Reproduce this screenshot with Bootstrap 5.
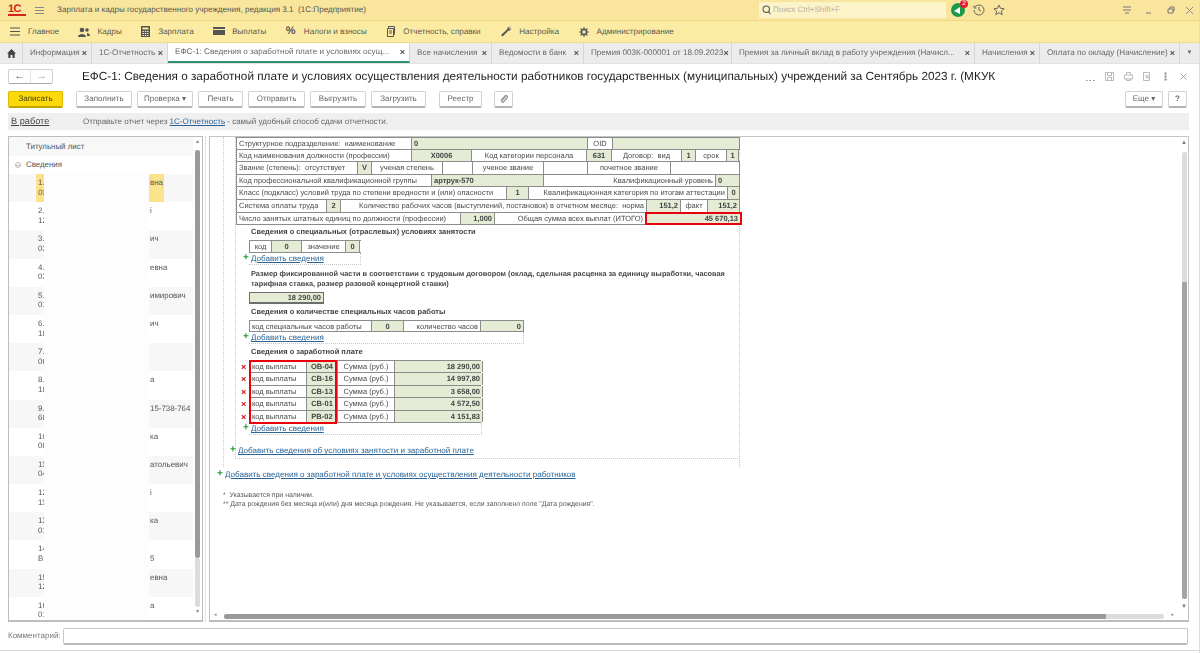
<!DOCTYPE html>
<html lang="ru"><head><meta charset="utf-8"><title>ЕФС-1</title>
<link rel="stylesheet" href="https://cdn.jsdelivr.net/npm/bootstrap@5.3.0/dist/css/bootstrap.min.css">
<style>
html,body{height:653px;overflow:hidden}
body{width:1200px;font-family:"Liberation Sans",Arial,sans-serif;font-size:8px;color:#4a4a4a;background:#fff;line-height:1.15;filter:blur(.35px);text-rendering:geometricPrecision;border-right:1px solid #ddd}
a{color:#2a6496}
svg{display:block;flex:none}
.ctl-a{margin-left:117px}.ctl-b{margin-left:12px}.ctl-c{margin-left:9px}
.pct{font-size:11px;color:#555;width:11px}.tiny{font-size:6px}
.topbar{height:20px;background:#f9e59b;padding-left:8px}
.logo1c{width:18px;font-weight:700;font-size:11px;color:#d3241c;line-height:9px;border-bottom:2px solid #d3241c;letter-spacing:-.5px;height:11px;margin-right:9px}
.wintitle{margin-left:13px;width:702px;font-size:8.1px;color:#555}
.searchbox{width:187px;height:16px;background:#fdf3c9;color:#b5b5a0;font-size:8px;padding-left:3px;gap:2px}
.belld{width:14px;height:14px;border-radius:50%;background:#1c9a4b;margin-left:5px;position:relative}
.bellb{position:absolute;top:-3px;right:-3px;width:8px;height:8px;border-radius:50%;background:#e0202a;color:#fff;font-size:6.5px;line-height:8px;text-align:center}
.sectbar{height:23px;background:#fbeba3;border-top:1px solid #efd985;border-bottom:1px solid #eedc92;padding-left:10px;font-size:8.1px;color:#5a5a50}
.sectbar span{margin-left:7px}
.secti{margin-right:19.5px}
.tabbar{height:21px;background:#ececec;font-size:8.1px;color:#666;border-bottom:1px solid #e2e2e2;white-space:nowrap}
.tabx{height:20px;border-right:1px solid #d4d4d4;padding:0 4px 0 7px}
.tabx b{margin-left:auto;font-size:9px;color:#555;font-weight:700}
.tab-home{width:23px;justify-content:center;padding:0}
.tab-on{background:#fff;border-bottom:2px solid #2e9070}
.t68{width:69px}.t75{width:76px}.t241{width:242px}.t81{width:82px}.t91{width:92px}.t148{width:148px}.t243{width:243px}.t65{width:65px}.t140{width:140px}.t20{width:19px;justify-content:center;padding:0;border:0}
.titlerow{height:15px;margin-top:5px;padding-left:8px}
.navbox{width:45px;height:15px;border:1px solid #d0d0d0;border-bottom-color:#aaa;border-radius:2px;margin-right:29px;color:#666}
.navbox i{flex:1;text-align:center;font-style:normal;font-size:11px;line-height:12px}
.navbox i+i{border-left:1px solid #e2e2e2;color:#aaa}
.doctitle{width:1004px;flex:none;font-size:11.75px;color:#1e1e1e;white-space:nowrap}
.ticons{gap:10px}
.tdots{margin-left:2px}
.tclose{margin-left:3px}
.cmdrow{height:18px;margin-top:6px;padding:0 12px 0 8px}
.tb{height:17px;border:1px solid #d2d2d2;border-bottom:2px solid #b4b4b4;border-radius:2px;background:#fff;font-size:8px;color:#666;justify-content:center;margin-right:5px}
.tb-save{width:55px;background:#fbd90d;border:1px solid #dcbc00;border-bottom:2px solid #c2a500;color:#4a4000;margin-right:13px}
.b56{width:56px}.b57{width:57px}.b45{width:45px}.b55{width:55px}.b43{width:43px;margin-left:8px;margin-right:12px}.b19{width:19px}.b38{width:38px}
.infobar{height:17px;margin:5px 10px 0 8px;background:#efefef;padding-left:3px;font-size:8px;color:#666}
.stateln{width:72px;font-size:9.2px;color:#444;text-decoration:underline}
.workarea{height:486px;margin:6px 0 0 8px}
.leftp{width:195px;height:486px;border:1px solid #bdbdbd;border-bottom-width:2px;position:relative;overflow:hidden}
.listcol{flex:1;overflow:hidden;font-size:7.9px;color:#555}
.headrow{height:19px;background:#f8f8f8;padding-left:17px}
.headrow2{height:18px;padding-left:6px;gap:5px;background:#fff}
.minus{width:6px;height:6px;border:1px solid #bbb;border-radius:50%;display:flex;align-items:center;justify-content:center}
.minus::after{content:"";width:4px;height:1px;background:#bbb}
.empl{height:28.2px;padding-left:27px;line-height:9.6px}
.empl:nth-child(odd){background:#f7f7f7}
.empl .lcol{width:114px;white-space:nowrap;overflow:hidden;padding:4px 0 0 2px}
.empl .rcol{white-space:nowrap;padding-top:4px}
.emp-on .lcol,.emp-on .rcol{background:#fbe38d;height:28px}
.emp-on .rcol{width:14px}
.redact{position:absolute;left:35px;top:37px;width:105px;height:450px;background:#fdfdfd}
.vbar{width:9px;padding-top:2px;color:#888;font-size:6px;text-align:center;background:#fff}
.vth{width:5px;height:408px;background:#9a9a9a;margin:4px auto 0;border-radius:2px}
.vtr{width:5px;height:49px;background:#dcdcdc;margin:0 auto 2px;border-radius:2px}
.gutter{width:6px;position:relative}
.gutter::after{content:"";display:block;height:100%;width:0;border-left:1px dotted #ccc;margin-left:2px}
.rightp{width:980px;height:486px;border:1px solid #c4c4c4;border-bottom:2px solid #bdbdbd;overflow:hidden}
.fmain{flex:1;min-height:0}
.formv{flex:1;overflow:hidden;padding-left:13px}
.rvbar{width:8px;padding-top:1px;color:#777;font-size:7px;line-height:9px;text-align:center}
.rvtr{width:5px;height:130px;margin:5px auto 0;background:#dcdcdc;border-radius:2px 2px 0 0}
.rvth{width:5px;height:317px;margin:0 auto 3px;background:#a4a4a4;border-radius:0 0 2px 2px}
.g1{width:517px;border-left:1px dotted #c8c8c8;border-right:1px dotted #c8c8c8;height:330px;padding-left:11px}
.g2{height:322px;width:505px;border-left:1px dotted #c8c8c8;border-bottom:1px dotted #c8c8c8}
.frow{height:12.6px;border-left:1px solid #8c8c8c;border-bottom:1px solid #8c8c8c;white-space:nowrap;overflow:visible}
.rtop{border-top:1px solid #8c8c8c}
.fc{height:100%;border-right:1px solid #8c8c8c;padding:0 2px;line-height:11.3px;flex:none;overflow:hidden;color:#4c4c4c;font-size:7.5px}
.cen{text-align:center}.rgt{text-align:right}
.gr{background:#e4ecd6;font-weight:700;color:#444}
.ww175{width:175px}.ww176{width:176px}.ww60{width:60px}.ww115{width:115px}.ww25{width:25px}.ww127{width:127px}.ww70{width:70px}.ww14{width:14px}.ww31{width:31px}.ww12{width:12px}
.ww120{width:121px}.ww71{width:71px}.ww30{width:30px}.ww44{width:44px}.ww83{width:83px}.ww69{width:69px}
.ww195{width:195px}.ww112{width:112px}.ww172{width:172px}.ww24{width:24px}
.ww270{width:270px}.ww22{width:22px}.ww199{width:199px}
.ww90{width:90px}.ww306{width:306px}.ww34{width:34px}.ww27{width:27px}.ww32{width:32px}
.ww224{width:224px}.ww151{width:151px}.ww95{width:95px}
.rbox{outline:2.5px solid #e8000b;outline-offset:-1px;position:relative;color:#444;z-index:2}
.inner{padding-left:13px}
.sect-t{font-weight:700;color:#444;padding-left:2px;font-size:7.5px}
.mt1{height:15px;padding-top:3px}
.mini{width:112px}
.addl{height:12px;gap:2px;line-height:12px}
.addl a{font-size:8.05px}
.plus{color:#1f9a2c;font-weight:700;font-size:10px;width:6px;line-height:10px;margin-left:-6px}
.dot-b{border-bottom:1px dotted #c8c8c8;border-right:1px dotted #c8c8c8}
.d361{width:112px;height:12px}
.tt2{height:27px;padding-top:4px;width:490px;line-height:10px;font-size:7.35px}
.box74{width:75px;height:12px;border:1px solid #6e6e6e;border-bottom-width:2px;text-align:right;padding-right:2px;line-height:10px;background:#e4ecd6;font-weight:700;font-size:7.5px}
.tt3{height:16px;padding-top:4px}
.w275{width:275px}.ww122{width:122px}.ww32b{width:32px}.ww77{width:77px}.ww43{width:43px}
.d523{width:275px}
.ww57{width:57px}.ww88{width:88px}.ww57b{width:57px}
.salwrap{position:relative;width:233px}
.sal{width:232px}
.xm{color:#d2111b;font-weight:700;font-size:9px;position:absolute;left:-8px;line-height:10px;margin-top:1px}
.redbox{position:absolute;left:0;top:0;width:88px;height:64px;border:2.5px solid #e8000b;pointer-events:none}
.d481{width:233px}
.lnk2{height:13px;margin-top:10px}
.lnk3{height:12px;margin-top:2px}
.foot{font-size:6.9px;color:#555;line-height:9px;margin-top:10px}
.hbar{height:8px;padding-left:4px;gap:3px;color:#888;font-size:5px}
.hth{width:882px;height:5px;background:#9a9a9a;border-radius:2px 0 0 2px;margin-left:4px}
.htr{width:58px;height:5px;background:#dcdcdc;border-radius:0 2px 2px 0;margin-left:-3px}
.harr{margin-left:5px}
.cmt{height:18px;margin-top:5px;padding-left:8px;color:#777;font-size:8px}
.cmt span{width:55px}
.cmtbox{width:1125px;height:17px;border:1px solid #c8c8c8;border-bottom:2px solid #bbb;border-radius:2px}
.winbot{height:1px;margin-top:5px;background:#d8d8d8}
</style></head><body>

<div class="topbar d-flex align-items-center">
<div class="logo1c">1С</div>
<svg width="9" height="9" viewBox="0 0 9 9" stroke="#888" stroke-width="1"><path d="M0 1.5h9M0 4.5h9M0 7.5h9"/></svg>
<div class="wintitle">Зарплата и кадры государственного учреждения, редакция 3.1 &nbsp;(1С:Предприятие)</div>
<div class="searchbox d-flex align-items-center"><svg width="9" height="10" viewBox="0 0 9 10" fill="none" stroke="#555" stroke-width="1.1"><circle cx="4.2" cy="4.2" r="3.2"/><path d="M6.5 6.8L8.5 9"/></svg>Поиск Ctrl+Shift+F</div>
<div class="belld"><svg width="14" height="14" viewBox="0 0 14 14" fill="#fff"><path d="M3 8l6-4v7z"/></svg><div class="bellb">2</div></div>
<svg class="ms-2" width="12" height="12" viewBox="0 0 12 12" fill="none" stroke="#666"><path d="M2 3a5 5 0 1 1-1 3M1 1.5V4h2.5M6 3v3l2 1.5"/></svg>
<svg class="ms-2" width="12" height="12" viewBox="0 0 12 12" fill="none" stroke="#666"><path d="M6 1l1.5 3.3 3.6.4-2.7 2.4.8 3.5L6 8.8l-3.2 1.8.8-3.500L.9 4.700l3.600-.4z"/></svg>
<svg class="ctl-a" width="10" height="10" viewBox="0 0 10 10" fill="none" stroke="#777"><path d="M1 2h8M1 5h8M3 8h4"/></svg>
<svg class="ctl-b" width="10" height="10" viewBox="0 0 10 10" stroke="#777"><path d="M2 8h5"/></svg>
<svg class="ctl-b" width="10" height="10" viewBox="0 0 10 10" fill="none" stroke="#777"><path d="M2 4h5v4H2zM4 4V2h4v4H7"/></svg>
<svg class="ctl-c" width="9" height="9" viewBox="0 0 9 9" stroke="#888"><path d="M1 1l7 7M8 1L1 8"/></svg>
</div>

<div class="sectbar d-flex align-items-center">
<div class="d-flex align-items-center secti"><svg width="10" height="9" viewBox="0 0 10 9" stroke="#555" stroke-width="1.2"><path d="M0 1h10M0 4.5h10M0 8h10"/></svg><span class="ms-2">Главное</span></div>
<div class="d-flex align-items-center secti"><svg width="12" height="10" viewBox="0 0 12 10" fill="#555"><circle cx="4" cy="3" r="2.3"/><circle cx="9" cy="3" r="1.8"/><path d="M0 10c0-4 8-4 8 0zM9 6c2 0 3 1.500 3 3H9z"/></svg><span>Кадры</span></div>
<div class="d-flex align-items-center secti"><svg width="9" height="11" viewBox="0 0 9 11" fill="#555"><path d="M0 0h9v11H0zM1.500 1.500v2h6v-2zM1.500 5v1h1.500V5zM3.800 5v1h1.500V5zM6 5v1h1.500V5zM1.500 7v1h1.500V7zM3.800 7v1h1.500V7zM6 7v1h1.500V7zM1.500 9v1h1.500V9zM3.800 9v1h1.500V9zM6 9v1h1.500V9z" fill-rule="evenodd"/></svg><span class="ms-2">Зарплата</span></div>
<div class="d-flex align-items-center secti"><svg width="12" height="8" viewBox="0 0 12 8" fill="#555"><path d="M0 0h12v8H0zM0 2v1h12V2z" fill-rule="evenodd"/></svg><span>Выплаты</span></div>
<div class="d-flex align-items-center secti"><b class="pct">%</b><span>Налоги и взносы</span></div>
<div class="d-flex align-items-center secti"><svg width="9" height="11" viewBox="0 0 9 11" fill="none" stroke="#555"><path d="M1.500 2.500h6v8h-6zM2.500 2.500V.5h6v8M3 5h3M3 7h3"/></svg><span class="ms-2">Отчетность, справки</span></div>
<div class="d-flex align-items-center secti"><svg width="12" height="11" viewBox="0 0 12 11" fill="#555"><path d="M11 0.500L8 1 7 3.500 1 9l1.500 1.500L8 5l2.500-1L11.500 1.500 10 3 8.500 2z"/></svg><span>Настройка</span></div>
<div class="d-flex align-items-center"><svg width="10" height="10" viewBox="0 0 10 10" fill="none" stroke="#555" stroke-width="1.500"><circle cx="5" cy="5" r="2.500"/><path d="M5 0v2M5 8v2M0 5h2M8 5h2M1.500 1.500l1.300 1.300M7.200 7.200l1.300 1.300M8.500 1.500L7.200 2.800M1.500 8.500l1.300-1.300" stroke-width="1.200"/></svg><span class="ms-2">Администрирование</span></div>
</div>

<div class="tabbar d-flex">
<div class="tabx tab-home d-flex align-items-center"><svg width="9" height="9" viewBox="0 0 9 9" fill="#444"><path d="M4.500 0L9 4.500H7.700V9H5.500V6H3.500V9H1.300V4.500H0z"/></svg></div>
<div class="tabx t68 d-flex align-items-center">Информация<b>×</b></div>
<div class="tabx t75 d-flex align-items-center">1С-Отчетность<b>×</b></div>
<div class="tabx t241 tab-on d-flex align-items-center">ЕФС-1: Сведения о заработной плате и условиях осущ...<b>×</b></div>
<div class="tabx t81 d-flex align-items-center">Все начисления<b>×</b></div>
<div class="tabx t91 d-flex align-items-center">Ведомости в банк<b>×</b></div>
<div class="tabx t148 d-flex align-items-center">Премия 003К-000001 от 18.09.2023<b>×</b></div>
<div class="tabx t243 d-flex align-items-center">Премия за личный вклад в работу учреждения (Начисл...<b>×</b></div>
<div class="tabx t65 d-flex align-items-center">Начисления<b>×</b></div>
<div class="tabx t140 d-flex align-items-center">Оплата по окладу (Начисление)<b>×</b></div>
<div class="tabx t20 tiny d-flex align-items-center">▼</div>
</div>

<div class="titlerow d-flex align-items-center">
<div class="navbox d-flex"><i>←</i><i>→</i></div>
<div class="doctitle">ЕФС-1: Сведения о заработной плате и условиях осуществления деятельности работников государственных (муниципальных) учреждений за Сентябрь 2023 г. (МКУК</div>
<div class="ticons d-flex align-items-center">
<svg width="9" height="9" viewBox="0 0 9 9" fill="#888"><path d="M0 8h1.500v1H0zM3.500 8H5v1H3.500zM7 8h1.500v1H7z"/></svg>
<svg width="9" height="9" viewBox="0 0 9 9" fill="none" stroke="#bbb"><path d="M.5.5h8v8h-8zM2.500.5v3h4v-3M2.500 8.500v-3h4v3"/></svg>
<svg width="9" height="9" viewBox="0 0 9 9" fill="none" stroke="#bbb"><path d="M2.500 3V.5h4V3M.5 3h8v4h-8zM2.500 6v2.500h4V6"/></svg>
<svg width="9" height="9" viewBox="0 0 9 9" fill="none" stroke="#bbb"><path d="M.5.5h6v8h-6zM3 3.500h2v2H3zM5 5.500l1.500 2"/></svg>
<svg class="tdots" width="3" height="9" viewBox="0 0 3 9" fill="#888"><path d="M.5.500h2v2h-2zM.5 3.500h2v2h-2zM.5 6.500h2v2h-2z"/></svg>
<svg class="tclose" width="7" height="7" viewBox="0 0 7 7" stroke="#aaa"><path d="M.5.500l6 6M6.500.500l-6 6"/></svg>
</div>
</div>

<div class="cmdrow d-flex align-items-center">
<div class="tb tb-save d-flex align-items-center">Записать</div>
<div class="tb b56 d-flex align-items-center">Заполнить</div>
<div class="tb b56 d-flex align-items-center">Проверка&nbsp;▾</div>
<div class="tb b45 d-flex align-items-center">Печать</div>
<div class="tb b57 d-flex align-items-center">Отправить</div>
<div class="tb b56 d-flex align-items-center">Выгрузить</div>
<div class="tb b55 d-flex align-items-center">Загрузить</div>
<div class="tb b43 d-flex align-items-center">Реестр</div>
<div class="tb b19 d-flex align-items-center"><svg width="9" height="10" viewBox="0 0 9 10" fill="none" stroke="#999" stroke-width="1.200"><path d="M7 2L3 6.500c-1 1.200.5 2.500 1.500 1.500L8 4C9.200 2.500 7.300.5 6 2L2 6.500"/></svg></div>
<div class="tb b38 d-flex align-items-center ms-auto">Еще&nbsp;▾</div>
<div class="tb b19 d-flex align-items-center me-0 fw-bold">?</div>
</div>

<div class="infobar d-flex align-items-center">
<div class="stateln">В работе</div>
<div>Отправьте отчет через <a href="#">1С-Отчетность</a> - самый удобный способ сдачи отчетности.</div>
</div>

<div class="workarea d-flex">
<div class="leftp d-flex">
<div class="listcol">
<div class="headrow d-flex align-items-center">Титульный лист</div>
<div class="headrow2 d-flex align-items-center"><i class="minus"></i>Сведения</div>
<div>
<div class="empl emp-on d-flex"><div class="lcol">1.<br>03</div><div class="rcol">вна</div></div>
<div class="empl d-flex"><div class="lcol">2.<br>12</div><div class="rcol">і</div></div>
<div class="empl d-flex"><div class="lcol">3.<br>03</div><div class="rcol">ич</div></div>
<div class="empl d-flex"><div class="lcol">4.<br>03</div><div class="rcol">евна</div></div>
<div class="empl d-flex"><div class="lcol">5.<br>01</div><div class="rcol">имирович</div></div>
<div class="empl d-flex"><div class="lcol">6.<br>18</div><div class="rcol">ич</div></div>
<div class="empl d-flex"><div class="lcol">7.<br>06</div><div class="rcol"></div></div>
<div class="empl d-flex"><div class="lcol">8.<br>18</div><div class="rcol">а</div></div>
<div class="empl d-flex"><div class="lcol">9.<br>68</div><div class="rcol">15-738-764</div></div>
<div class="empl d-flex"><div class="lcol">10<br>08</div><div class="rcol">ка</div></div>
<div class="empl d-flex"><div class="lcol">11<br>04</div><div class="rcol">атольевич</div></div>
<div class="empl d-flex"><div class="lcol">12<br>11</div><div class="rcol">і</div></div>
<div class="empl d-flex"><div class="lcol">13<br>01</div><div class="rcol">ка</div></div>
<div class="empl d-flex"><div class="lcol">14<br>В</div><div class="rcol"><br>5</div></div>
<div class="empl d-flex"><div class="lcol">15<br>12</div><div class="rcol">евна</div></div>
<div class="empl d-flex"><div class="lcol">16<br>01</div><div class="rcol">а</div></div>
</div>
</div>
<div class="redact"></div>
<div class="vbar d-flex flex-column"><div>▴</div><div class="vth"></div><div class="vtr"></div><div>▾</div></div>
</div>
<div class="gutter"></div>
<div class="rightp d-flex flex-column">
<div class="fmain d-flex">
<div class="formv">
<div class="g1"><div class="g2">
<div class="frow d-flex rtop"><div class="fc ww175">Структурное подразделение: &nbsp;наименование</div><div class="fc gr ww176">0</div><div class="fc ww25 cen">OID</div><div class="fc gr ww127"></div></div>
<div class="frow d-flex"><div class="fc ww175">Код наименования должности (профессии)</div><div class="fc gr cen ww60">Х0006</div><div class="fc cen ww115">Код категории персонала</div><div class="fc gr cen ww25">631</div><div class="fc cen ww70">Договор: &nbsp;вид</div><div class="fc gr cen ww14">1</div><div class="fc cen ww31">срок</div><div class="fc gr cen ww12">1</div></div>
<div class="frow d-flex"><div class="fc ww120">Звание (степень): &nbsp;отсутствует</div><div class="fc gr cen ww14">V</div><div class="fc cen ww71">ученая степень</div><div class="fc ww30"></div><div class="fc cen ww71">ученое звание</div><div class="fc ww44"></div><div class="fc cen ww83">почетное звание</div><div class="fc ww69"></div></div>
<div class="frow d-flex"><div class="fc ww195">Код профессиональной квалификационной группы</div><div class="fc gr ww112">артрук-570</div><div class="fc rgt ww172">Квалификационный уровень</div><div class="fc gr ww24">0</div></div>
<div class="frow d-flex"><div class="fc ww270">Класс (подкласс) условий труда по степени вредности и (или) опасности</div><div class="fc gr cen ww22">1</div><div class="fc rgt ww199">Квалификационная категория по итогам аттестации</div><div class="fc gr cen ww12">0</div></div>
<div class="frow d-flex"><div class="fc ww90">Система оплаты труда</div><div class="fc gr cen ww14">2</div><div class="fc rgt ww306">Количество рабочих часов (выступлений, постановок) в отчетном месяце: &nbsp;норма</div><div class="fc gr rgt ww34">151,2</div><div class="fc cen ww27">факт</div><div class="fc gr rgt ww32">151,2</div></div>
<div class="frow d-flex"><div class="fc ww224">Число занятых штатных единиц по должности (профессии)</div><div class="fc gr rgt ww34">1,000</div><div class="fc rgt ww151">Общая сумма всех выплат (ИТОГО)</div><div class="fc gr rgt ww95 rbox">45 670,13</div></div>

<div class="inner">
<div class="sect-t mt1">Сведения о специальных (отраслевых) условиях занятости</div>
<div class="mini">
<div class="frow d-flex rtop"><div class="fc cen ww22">код</div><div class="fc gr cen ww30">0</div><div class="fc cen ww44">значение</div><div class="fc gr cen ww14">0</div></div>
</div>
<div class="d361 dot-b addl d-flex"><span class="plus">+</span><a href="#">Добавить сведения</a></div>
<div class="sect-t tt2">Размер фиксированной части в соответствии с трудовым договором (оклад, сдельная расценка за единицу выработки, часовая тарифная ставка, размер разовой концертной ставки)</div>
<div class="box74">18 290,00</div>
<div class="sect-t tt3">Сведения о количестве специальных часов работы</div>
<div class="w275">
<div class="frow d-flex rtop"><div class="fc ww122">код специальных часов работы</div><div class="fc gr cen ww32b">0</div><div class="fc rgt ww77">количество часов</div><div class="fc gr rgt ww43">0</div></div>
</div>
<div class="d523 dot-b addl d-flex"><span class="plus">+</span><a href="#">Добавить сведения</a></div>
<div class="sect-t tt3 mb-0">Сведения о заработной плате</div>
<div class="salwrap">
<div class="sal">
<div class="frow d-flex rtop"><span class="xm">×</span><div class="fc ww57">код выплаты</div><div class="fc gr cen ww31">ОВ-04</div><div class="fc cen ww57b">Сумма (руб.)</div><div class="fc gr rgt ww88">18 290,00</div></div>
<div class="frow d-flex"><span class="xm">×</span><div class="fc ww57">код выплаты</div><div class="fc gr cen ww31">СВ-16</div><div class="fc cen ww57b">Сумма (руб.)</div><div class="fc gr rgt ww88">14 997,80</div></div>
<div class="frow d-flex"><span class="xm">×</span><div class="fc ww57">код выплаты</div><div class="fc gr cen ww31">СВ-13</div><div class="fc cen ww57b">Сумма (руб.)</div><div class="fc gr rgt ww88">3 658,00</div></div>
<div class="frow d-flex"><span class="xm">×</span><div class="fc ww57">код выплаты</div><div class="fc gr cen ww31">СВ-01</div><div class="fc cen ww57b">Сумма (руб.)</div><div class="fc gr rgt ww88">4 572,50</div></div>
<div class="frow d-flex"><span class="xm">×</span><div class="fc ww57">код выплаты</div><div class="fc gr cen ww31">РВ-02</div><div class="fc cen ww57b">Сумма (руб.)</div><div class="fc gr rgt ww88">4 151,83</div></div>
</div>
<div class="redbox"></div>
</div>
<div class="d481 dot-b addl d-flex"><span class="plus">+</span><a href="#">Добавить сведения</a></div>
</div>
<div class="lnk2 addl d-flex"><span class="plus">+</span><a href="#">Добавить сведения об условиях занятости и заработной плате</a></div>
</div></div>
<div class="lnk3 addl d-flex"><span class="plus">+</span><a href="#">Добавить сведения о заработной плате и условиях осуществления деятельности работников</a></div>
<div class="foot">*&nbsp; Указывается при наличии.<br>** Дата рождения без месяца и(или) дня месяца рождения. Не указывается, если заполнено поле "Дата рождения".</div>
</div>
<div class="rvbar"><div>▴</div><div class="rvtr"></div><div class="rvth"></div><div>▾</div></div>
</div>
<div class="hbar d-flex align-items-center"><span>◂</span><div class="hth"></div><div class="htr"></div><span class="harr">▸</span></div>
</div>
</div>

<div class="cmt d-flex align-items-center"><span>Комментарий:</span><div class="cmtbox"></div></div>
<div class="winbot"></div>
</body></html>
